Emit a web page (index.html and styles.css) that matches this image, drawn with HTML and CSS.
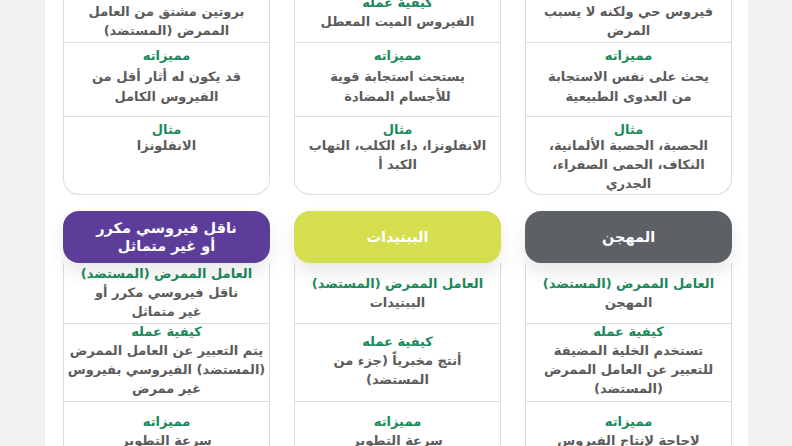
FILE: index.html
```html
<!DOCTYPE html>
<html lang="ar" dir="rtl">
<head>
  <meta charset="UTF-8" />
  <title>أنواع اللقاحات</title>
  <meta name="viewport" content="width=device-width, initial-scale=1.0" />
  <link rel="stylesheet" href="styles.css">
</head>
<body>
  <main class="panel">
    <!-- الصف العلوي (مقطوع من الأعلى) -->
    <section class="cards cards-top">
      <article class="card">
        <div class="cell cell-how">
          <h4>كيفية عمله</h4>
          <p>فيروس حي ولكنه لا يسبب<br>المرض</p>
        </div>
        <div class="cell cell-pros">
          <h4>مميزاته</h4>
          <p>يحث على نفس الاستجابة<br>من العدوى الطبيعية</p>
        </div>
        <div class="cell cell-example">
          <h4>مثال</h4>
          <p>الحصبة، الحصبة الألمانية،<br>النكاف، الحمى الصفراء،<br>الجدري</p>
        </div>
      </article>
      <article class="card">
        <div class="cell cell-how">
          <h4>كيفية عمله</h4>
          <p>الفيروس الميت المعطل</p>
        </div>
        <div class="cell cell-pros">
          <h4>مميزاته</h4>
          <p>يستحث استجابة قوية<br>للأجسام المضادة</p>
        </div>
        <div class="cell cell-example">
          <h4>مثال</h4>
          <p>الانفلونزا، داء الكلب، التهاب<br>الكبد أ</p>
        </div>
      </article>
      <article class="card">
        <div class="cell cell-how">
          <h4>كيفية عمله</h4>
          <p>بروتين مشتق من العامل<br>الممرض (المستضد)</p>
        </div>
        <div class="cell cell-pros">
          <h4>مميزاته</h4>
          <p>قد يكون له أثار أقل من<br>الفيروس الكامل</p>
        </div>
        <div class="cell cell-example">
          <h4>مثال</h4>
          <p>الانفلونزا</p>
        </div>
      </article>
    </section>

    <section class="cards cards-bottom">
      <article class="card">
        <h3 class="card-head head-grey">المهجن</h3>
        <div class="card-body">
          <div class="cell cell-agent">
            <h4>العامل الممرض (المستضد)</h4>
            <p>المهجن</p>
          </div>
          <div class="cell cell-work">
            <h4>كيفية عمله</h4>
            <p>تستخدم الخلية المضيفة<br>للتعبير عن العامل الممرض<br>(المستضد)</p>
          </div>
          <div class="cell cell-last">
            <h4>مميزاته</h4>
            <p>لاحاجة لإنتاج الفيروس</p>
          </div>
        </div>
      </article>
      <article class="card">
        <h3 class="card-head head-lime">الببتيدات</h3>
        <div class="card-body">
          <div class="cell cell-agent">
            <h4>العامل الممرض (المستضد)</h4>
            <p>الببتيدات</p>
          </div>
          <div class="cell cell-work">
            <h4>كيفية عمله</h4>
            <p>أنتج مخبرياً (جزء من<br>المستضد)</p>
          </div>
          <div class="cell cell-last">
            <h4>مميزاته</h4>
            <p>سرعة التطوير</p>
          </div>
        </div>
      </article>
      <article class="card">
        <h3 class="card-head head-purple">ناقل فيروسي مكرر<br>أو غير متماثل</h3>
        <div class="card-body">
          <div class="cell cell-agent">
            <h4>العامل الممرض (المستضد)</h4>
            <p>ناقل فيروسي مكرر أو<br>غير متماثل</p>
          </div>
          <div class="cell cell-work">
            <h4>كيفية عمله</h4>
            <p>يتم التعبير عن العامل الممرض<br>(المستضد) الفيروسي بفيروس<br>غير ممرض</p>
          </div>
          <div class="cell cell-last">
            <h4>مميزاته</h4>
            <p>سرعة التطوير</p>
          </div>
        </div>
      </article>
    </section>
  </main>
</body>
</html>
```

FILE: styles.css
```css
:root {
  --line: #dcdcdc;
  --green: #1b8a5a;
  --text: #5b5b5b;
}

body {
  margin: 0;
  background: #f1f1f1;
  font-family: "DejaVu Sans", sans-serif;
  overflow: hidden;
}

.panel {
  display: flow-root;
  width: 703px;
  height: 446px;
  margin-right: 44px;
  padding: 0 16px 0 18px;
  box-sizing: border-box;
  background: #fff;
}

.cards {
  display: grid;
  grid-template-columns: repeat(3, 207px);
  gap: 24px;
}

.cards-top {
  margin-top: -18px;
}

.cards-top .card {
  border: 1px solid var(--line);
  border-top: none;
  border-radius: 0 0 16px 16px;
}

.cards-bottom {
  margin-top: 16px;
}

.card-head {
  margin: 0;
  height: 52px;
  display: flex;
  align-items: center;
  justify-content: center;
  border-radius: 16px;
  color: #fff;
  font-size: 14.5px;
  line-height: 18px;
  font-weight: bold;
  text-align: center;
  position: relative;
  box-shadow: 0 10px 18px rgba(0, 0, 0, 0.09);
}

.head-grey { background: #5d6166; }
.head-lime { background: #d4de4e; }
.head-purple { background: #5c3d99; }

.card-body {
  border: 1px solid var(--line);
  border-top: none;
}

.cell {
  display: flex;
  flex-direction: column;
  justify-content: center;
  text-align: center;
  white-space: nowrap;
  border-bottom: 1px solid var(--line);
  box-sizing: border-box;
}

.cell:last-child {
  border-bottom: none;
}

.cell h4 {
  margin: 0;
  color: var(--green);
  font-size: 13px;
  line-height: 18px;
  font-weight: bold;
}

.cell p {
  margin: 0;
  color: var(--text);
  font-size: 13px;
  line-height: 19px;
  font-weight: bold;
}

.cell-how { height: 61px; }

.cell-pros {
  height: 74px;
  justify-content: flex-start;
  padding-top: 4px;
}

.cell-pros p {
  margin-top: 2px;
  line-height: 20px;
}

.cell-example {
  height: 77px;
  justify-content: flex-start;
  padding-top: 4px;
}

.cell-example p {
  margin-top: -3px;
}

.cell-agent { height: 61px; }
.cell-work { height: 78px; padding-bottom: 4px; }
.cell-last { height: 58px; }
```
